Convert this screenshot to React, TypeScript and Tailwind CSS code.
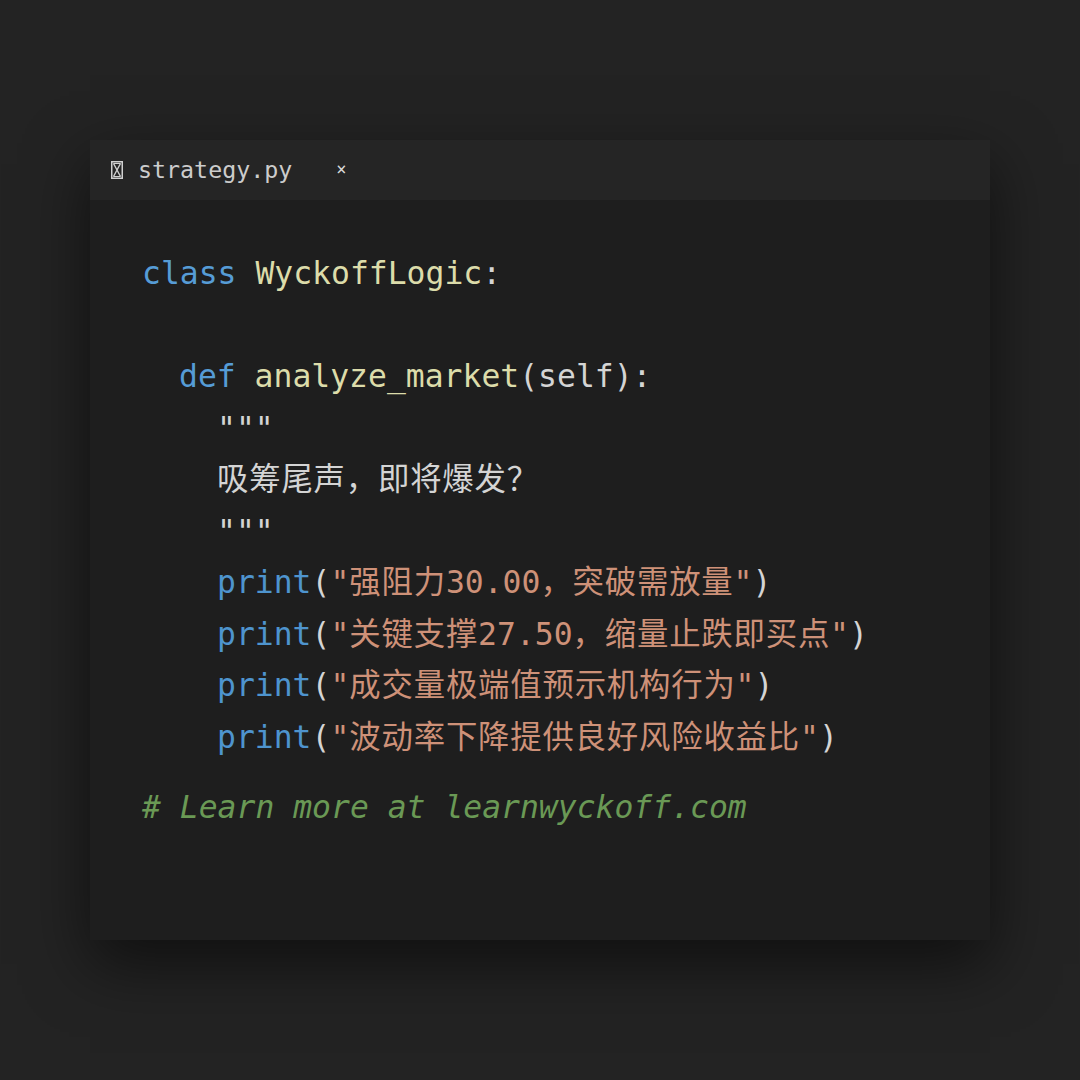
const mono = "font-['DejaVu_Sans_Mono','Noto_Sans_CJK_SC',monospace]";

const kw = "text-[#569cd6]";
const fn = "text-[#dcdcaa]";
const punc = "text-[#d4d4d4]";
const str = "text-[#ce9178]";
const cmt = "text-[#6a9955]";

// CJK glyphs in the shot run a little wider than 1em
function Cjk({ text }: { text: string }) {
  const parts = text.split(/([\u3000-\u9fff\uff00-\uffef]+)/);
  return (
    <>
      {parts.map((p, i) =>
        i % 2 === 1 ? (
          <span key={i} className="tracking-[0.8px]">
            {p}
          </span>
        ) : (
          <span key={i}>{p}</span>
        )
      )}
    </>
  );
}

function Line({ indent = 0, children }: { indent?: number; children?: React.ReactNode }) {
  const pad = ["pl-0", "pl-[37px]", "pl-[75px]"][indent];
  return <div className={`h-[51.5px] whitespace-pre ${pad}`}>{children}</div>;
}

const prints = [
  "强阻力30.00，突破需放量",
  "关键支撑27.50，缩量止跌即买点",
  "成交量极端值预示机构行为",
  "波动率下降提供良好风险收益比",
];

export default function App() {
  return (
    <div className="w-[1080px] h-[1080px] bg-[#232323] flex items-center justify-center">
      <div className="w-[900px] h-[800px] bg-[#1e1e1e] flex flex-col shadow-[0_24px_60px_rgba(0,0,0,0.55)]">
        {/* tab bar */}
        <div className={`h-[60px] bg-[#252525] flex items-center pl-[21px] text-[23.3px] text-[#cccccc] ${mono}`}>
          <svg width="12" height="18" viewBox="0 0 12 18" className="mr-[15px]">
            <rect x="0.75" y="0.75" width="10.5" height="16.5" fill="none" stroke="#d0d0d0" strokeWidth="1.5" />
            <path d="M2.5 2.5 L9.5 15.5 M9.5 2.5 L2.5 15.5" stroke="#d0d0d0" strokeWidth="1.4" />
            <path d="M2.5 2.5 H9.5 M2.5 15.5 H9.5" stroke="#d0d0d0" strokeWidth="1.2" />
          </svg>
          <span>strategy.py</span>
          <span className="ml-[44px] text-[17px] text-[#d8d8d8]">×</span>
        </div>

        {/* code */}
        <div className={`pl-[52px] pt-[48px] text-[31.4px] leading-[51.5px] ${mono}`}>
          <Line>
            <span className={kw}>class</span> <span className={fn}>WyckoffLogic</span>
            <span className={punc}>:</span>
          </Line>
          <Line />
          <Line indent={1}>
            <span className={kw}>def</span> <span className={fn}>analyze_market</span>
            <span className={punc}>(self):</span>
          </Line>
          <Line indent={2}>
            <span className={punc}>"""</span>
          </Line>
          <Line indent={2}>
            <span className={punc}>
              <Cjk text="吸筹尾声，即将爆发？" />
            </span>
          </Line>
          <Line indent={2}>
            <span className={punc}>"""</span>
          </Line>
          {prints.map((p) => (
            <Line indent={2} key={p}>
              <span className="text-[#4e94ce]">print</span>
              <span className={punc}>(</span>
              <span className={str}>
                "<Cjk text={p} />"
              </span>
              <span className={punc}>)</span>
            </Line>
          ))}
          <div className={`mt-[19px] h-[51.5px] italic whitespace-pre ${cmt}`}># Learn more at learnwyckoff.com</div>
        </div>
      </div>
    </div>
  );
}
